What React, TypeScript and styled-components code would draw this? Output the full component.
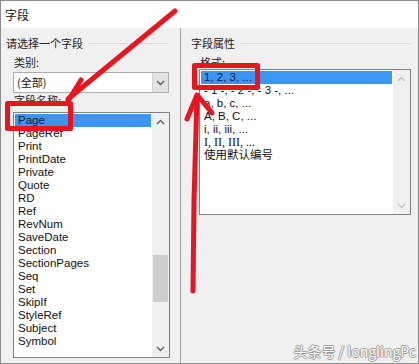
import React from "react";
import styled, { createGlobalStyle } from "styled-components";

const GlobalStyle = createGlobalStyle`
  html, body {
    margin: 0;
    padding: 0;
    background: #fff;
  }
  body {
    font-family: "Liberation Sans", "Noto Sans CJK SC", sans-serif;
  }
`;

interface ListEntry {
  label: string;
  serif?: boolean;
}

const fieldNames: ListEntry[] = [
  "Page", "PageRef", "Print", "PrintDate", "Private", "Quote", "RD", "Ref", "RevNum",
  "SaveDate", "Section", "SectionPages", "Seq", "Set", "SkipIf", "StyleRef", "Subject", "Symbol",
].map((label) => ({ label }));

const formats: ListEntry[] = [
  { label: "1, 2, 3, ..." },
  { label: "- 1 -, - 2 -, - 3 -, ..." },
  { label: "a, b, c, ..." },
  { label: "A, B, C, ..." },
  { label: "i, ii, iii, ..." },
  { label: "I, II, III, ...", serif: true },
  { label: "使用默认编号" },
];

const Chevron = ({ up, color }: { up?: boolean; color: string }) => (
  <svg width="9" height="6" viewBox="0 0 9 6">
    <polyline
      points={up ? "1,5 4.5,1.5 8,5" : "1,1 4.5,4.5 8,1"}
      fill="none"
      stroke={color}
      strokeWidth="1.4"
    />
  </svg>
);

interface ListBoxProps {
  items: ListEntry[];
  width: number;
  height: number;
  thumbTop?: number;
  thumbHeight?: number;
}

const ListBox = ({ items, width, height, thumbTop, thumbHeight }: ListBoxProps) => {
  const enabled = thumbHeight !== undefined;
  const arrow = enabled ? "#606060" : "#c4c4c4";
  return (
    <List $w={width} $h={height}>
      <Rows>
        {items.map((item, index) => (
          <Row key={index} $selected={index === 0} $serif={item.serif}>
            {item.label}
          </Row>
        ))}
      </Rows>
      <ScrollBar>
        <ScrollButton>
          <Chevron up color={arrow} />
        </ScrollButton>
        <Track>
          {enabled && <Thumb style={{ marginTop: thumbTop, height: thumbHeight }} />}
        </Track>
        <ScrollButton>
          <Chevron color={arrow} />
        </ScrollButton>
      </ScrollBar>
    </List>
  );
};

const App = () => {
  return (
    <>
      <GlobalStyle />
      <Window>
        <TitleBar>字段</TitleBar>
        <Body>
          <LeftPanel>
            <GroupHeader>
              <span>请选择一个字段</span>
            </GroupHeader>
            <Content $left={12}>
              <Label>类别:</Label>
              <Combo>
                <ComboText>(全部)</ComboText>
                <ComboButton>
                  <Chevron color="#5a5a5a" />
                </ComboButton>
              </Combo>
              <Label $top={0}>字段名称:</Label>
              <Spacer />
              <ListBox items={fieldNames} width={157} height={246} thumbTop={125} thumbHeight={47} />
            </Content>
          </LeftPanel>
          <RightPanel>
            <GroupHeader $left={10} $right={7}>
              <span>字段属性</span>
            </GroupHeader>
            <Content $left={18}>
              <Label>格式:</Label>
              <ListBox items={formats} width={212} height={146} />
            </Content>
          </RightPanel>
        </Body>

        <Annotations viewBox="0 0 419 364">
          <g stroke="#e8141f" strokeWidth="5" strokeLinecap="round" strokeLinejoin="round" fill="none">
            <path d="M175 11 L68 99" />
            <path d="M81 80 L68 101" />
            <rect x="7.5" y="103.5" width="63" height="25" />
            <rect x="194.5" y="65.5" width="63" height="22" />
            <path d="M193 291 L194 200 L197 96" />
            <path d="M197 95 L187 119" />
            <path d="M198 96 L212 113" />
          </g>
        </Annotations>
        <Watermark>头条号 / longlingPc</Watermark>
      </Window>
    </>
  );
};

export default App;

const Window = styled.div`
  position: relative;
  width: 419px;
  height: 364px;
  box-sizing: border-box;
  border: 1px solid #8c8c8c;
  display: flex;
  flex-direction: column;
  overflow: hidden;
  background: #f0f0f0;
`;

const TitleBar = styled.div`
  height: 27px;
  flex: none;
  background: #fff;
  padding-left: 4px;
  font-family: "Noto Sans CJK SC", sans-serif;
  font-size: 12px;
  line-height: 27px;
  color: #111;
`;

const Body = styled.div`
  flex: 1;
  display: flex;
  background: #f0f0f0;
`;

const LeftPanel = styled.div`
  width: 180px;
  flex: none;
  box-sizing: border-box;
  border-right: 1px solid #a3a3a3;
  display: flex;
  flex-direction: column;
`;

const RightPanel = styled.div`
  flex: 1;
  display: flex;
  flex-direction: column;
`;

const GroupHeader = styled.div<{ $left?: number; $right?: number }>`
  margin-top: 8px;
  height: 14px;
  padding: 0 ${(p) => p.$right ?? 11}px 0 ${(p) => p.$left ?? 5}px;
  display: flex;
  align-items: center;
  gap: 6px;
  font-family: "Noto Sans CJK SC", sans-serif;
  font-size: 11px;
  line-height: 14px;
  color: #222;

  &::after {
    content: "";
    flex: 1;
    height: 1px;
    background: #d8d8d8;
  }
`;

const Content = styled.div<{ $left: number }>`
  padding-left: ${(p) => p.$left}px;
  display: flex;
  flex-direction: column;
`;

const Label = styled.div<{ $top?: number }>`
  margin-top: ${(p) => p.$top ?? 5}px;
  padding-left: 1px;
  height: 14px;
  font-family: "Noto Sans CJK SC", sans-serif;
  font-size: 11px;
  line-height: 14px;
  color: #222;
`;

const Spacer = styled.div`
  height: 5px;
`;

const Combo = styled.div`
  margin-top: 3px;
  width: 156px;
  height: 21px;
  box-sizing: border-box;
  border: 1px solid #adadad;
  background: #fff;
  display: flex;
`;

const ComboText = styled.div`
  flex: 1;
  padding-left: 3px;
  font-family: "Noto Sans CJK SC", sans-serif;
  font-size: 11px;
  line-height: 19px;
  color: #111;
`;

const ComboButton = styled.div`
  width: 15px;
  background: #e3e3e3;
  border-left: 1px solid #d0d0d0;
  display: flex;
  align-items: center;
  justify-content: center;
`;

const List = styled.div<{ $w: number; $h: number }>`
  width: ${(p) => p.$w}px;
  height: ${(p) => p.$h}px;
  box-sizing: border-box;
  border: 1px solid #828282;
  background: #fff;
  display: flex;
`;

const Rows = styled.div`
  flex: 1;
  padding-top: 1px;
  overflow: hidden;
`;

const Row = styled.div<{ $selected?: boolean; $serif?: boolean }>`
  height: 13px;
  margin: 0 1px;
  padding-left: 3px;
  font-family: ${(p) =>
    p.$serif ? '"Liberation Serif", serif' : '"Liberation Sans", "Noto Sans CJK SC", sans-serif'};
  font-size: ${(p) => (p.$serif ? 12 : 11.5)}px;
  line-height: 13px;
  white-space: nowrap;
  overflow: hidden;
  color: ${(p) => (p.$selected ? "#0c1a33" : "#111")};
  background: ${(p) => (p.$selected ? "#3996f3" : "transparent")};
`;

const ScrollBar = styled.div`
  width: 17px;
  flex: none;
  background: #f0f0f0;
  display: flex;
  flex-direction: column;
`;

const ScrollButton = styled.div`
  height: 17px;
  display: flex;
  align-items: center;
  justify-content: center;
`;

const Track = styled.div`
  flex: 1;
  display: flex;
  flex-direction: column;
`;

const Thumb = styled.div`
  margin-left: 1px;
  width: 15px;
  background: #cdcdcd;
`;

const Annotations = styled.svg`
  position: absolute;
  left: -1px;
  top: -1px;
  width: 419px;
  height: 364px;
  pointer-events: none;
`;

const Watermark = styled.div`
  position: absolute;
  right: 2px;
  bottom: 4px;
  font-family: "Noto Sans CJK SC", "Noto Sans", sans-serif;
  font-size: 14px;
  line-height: 16px;
  color: #fbfbfb;
  text-shadow: 1px 0 0 #a0a0a0, -1px 0 0 #a0a0a0, 0 1px 0 #a0a0a0, 0 -1px 0 #a0a0a0;
  pointer-events: none;
`;
